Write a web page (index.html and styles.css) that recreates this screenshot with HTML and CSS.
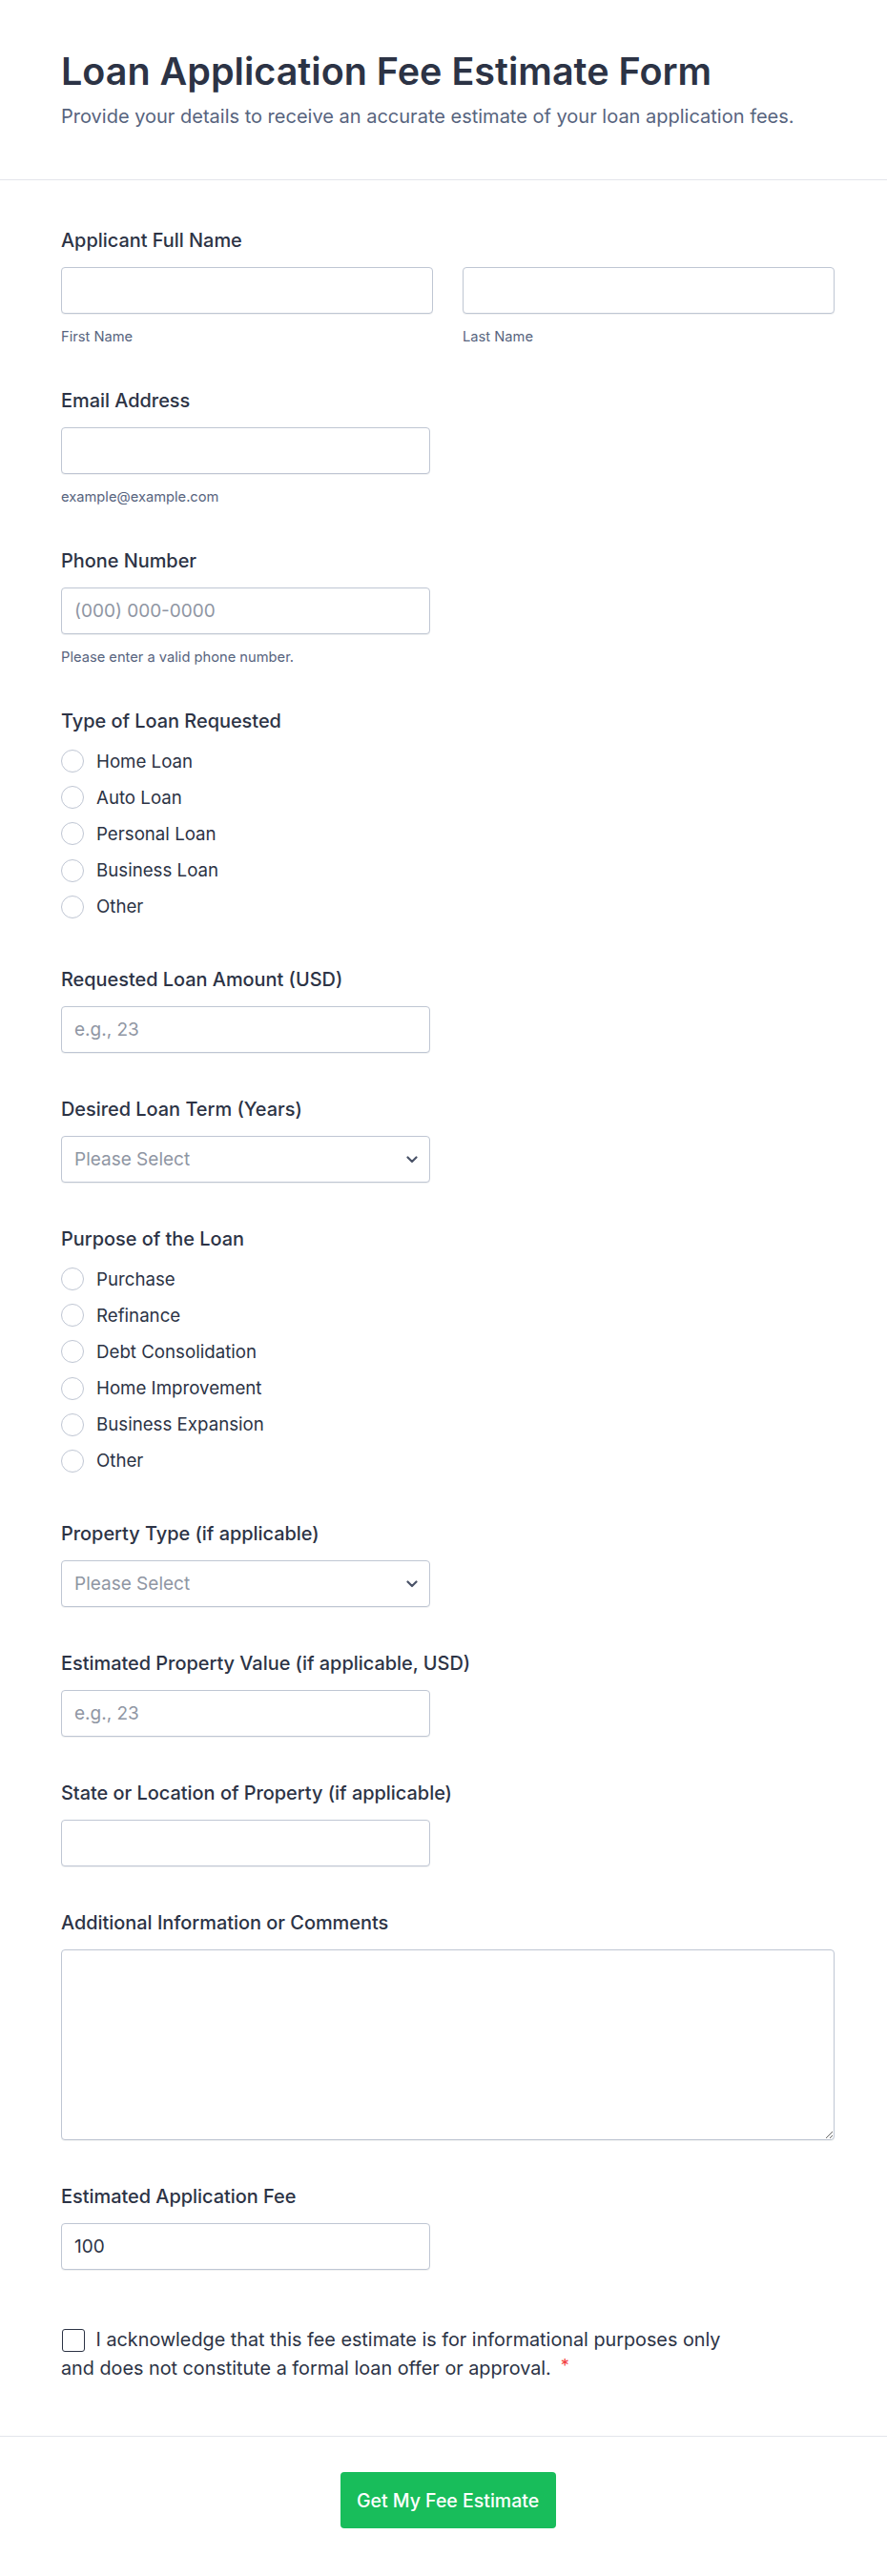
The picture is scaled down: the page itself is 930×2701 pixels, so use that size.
FILE: index.html
```html
<!DOCTYPE html>
<html lang="en">
<head>
<meta charset="utf-8">
<title>Loan Application Fee Estimate Form</title>
<link rel="stylesheet" href="styles.css">
</head>
<body>
<div class="page">
  <header class="form-header">
    <h1 class="form-title">Loan Application Fee Estimate Form</h1>
    <p class="form-subtitle">Provide your details to receive an accurate estimate of your loan application fees.</p>
  </header>

  <main class="form-body">
    <div class="field">
      <label class="field-label">Applicant Full Name</label>
      <div class="name-grid">
        <div class="sub-field">
          <input class="text-input full" type="text">
          <span class="sublabel">First Name</span>
        </div>
        <div class="sub-field">
          <input class="text-input full" type="text">
          <span class="sublabel">Last Name</span>
        </div>
      </div>
    </div>

    <div class="field">
      <label class="field-label">Email Address</label>
      <input class="text-input" type="email">
      <span class="sublabel">example@example.com</span>
    </div>

    <div class="field">
      <label class="field-label">Phone Number</label>
      <input class="text-input" type="tel" placeholder="(000) 000-0000">
      <span class="sublabel">Please enter a valid phone number.</span>
    </div>

    <div class="field field-options">
      <label class="field-label">Type of Loan Requested</label>
      <div class="options">
        <label class="option"><input class="radio" type="radio" name="loantype"><span>Home Loan</span></label>
        <label class="option"><input class="radio" type="radio" name="loantype"><span>Auto Loan</span></label>
        <label class="option"><input class="radio" type="radio" name="loantype"><span>Personal Loan</span></label>
        <label class="option"><input class="radio" type="radio" name="loantype"><span>Business Loan</span></label>
        <label class="option"><input class="radio" type="radio" name="loantype"><span>Other</span></label>
      </div>
    </div>

    <div class="field">
      <label class="field-label">Requested Loan Amount (USD)</label>
      <input class="text-input" type="text" placeholder="e.g., 23">
    </div>

    <div class="field">
      <label class="field-label">Desired Loan Term (Years)</label>
      <div class="select-wrap">
        <select class="select-input">
          <option>Please Select</option>
        </select>
        <svg class="chevron" width="12" height="8" viewBox="0 0 12 8"><path d="M1.5 1.5 L6 6 L10.5 1.5" fill="none" stroke="#4a5368" stroke-width="2.2" stroke-linecap="round" stroke-linejoin="round"/></svg>
      </div>
    </div>

    <div class="field field-options">
      <label class="field-label">Purpose of the Loan</label>
      <div class="options">
        <label class="option"><input class="radio" type="radio" name="purpose"><span>Purchase</span></label>
        <label class="option"><input class="radio" type="radio" name="purpose"><span>Refinance</span></label>
        <label class="option"><input class="radio" type="radio" name="purpose"><span>Debt Consolidation</span></label>
        <label class="option"><input class="radio" type="radio" name="purpose"><span>Home Improvement</span></label>
        <label class="option"><input class="radio" type="radio" name="purpose"><span>Business Expansion</span></label>
        <label class="option"><input class="radio" type="radio" name="purpose"><span>Other</span></label>
      </div>
    </div>

    <div class="field">
      <label class="field-label">Property Type (if applicable)</label>
      <div class="select-wrap">
        <select class="select-input">
          <option>Please Select</option>
        </select>
        <svg class="chevron" width="12" height="8" viewBox="0 0 12 8"><path d="M1.5 1.5 L6 6 L10.5 1.5" fill="none" stroke="#4a5368" stroke-width="2.2" stroke-linecap="round" stroke-linejoin="round"/></svg>
      </div>
    </div>

    <div class="field">
      <label class="field-label">Estimated Property Value (if applicable, USD)</label>
      <input class="text-input" type="text" placeholder="e.g., 23">
    </div>

    <div class="field">
      <label class="field-label">State or Location of Property (if applicable)</label>
      <input class="text-input" type="text">
    </div>

    <div class="field">
      <label class="field-label">Additional Information or Comments</label>
      <textarea class="textarea-input"></textarea>
    </div>

    <div class="field">
      <label class="field-label">Estimated Application Fee</label>
      <input class="text-input" type="text" value="100">
    </div>

    <div class="field field-check">
      <label class="check-label"><input class="checkbox" type="checkbox"> I acknowledge that this fee estimate is for informational purposes only<br>and does not constitute a formal loan offer or approval.<span class="required">*</span></label>
    </div>
  </main>

  <footer class="form-footer">
    <button class="submit-btn" type="button">Get My Fee Estimate</button>
  </footer>
</div>
</body>
</html>
```

FILE: styles.css
```css
* { box-sizing: border-box; }

html, body {
  margin: 0;
  padding: 0;
  background: #ffffff;
}

body {
  font-family: Inter, "Noto Sans", "Liberation Sans", sans-serif;
  color: #2c3345;
}

.page {
  width: 930px;
}

.form-header {
  padding: 52px 55px 52px 64px;
  border-bottom: 1px solid #e3e5eb;
}

.form-title {
  margin: 0;
  font-size: 39.5px;
  line-height: 47px;
  font-weight: 600;
  color: #2c3345;
}

.form-subtitle {
  margin: 10px 0 0;
  font-size: 20px;
  line-height: 27px;
  font-weight: 400;
  color: #57647e;
}

.form-body {
  display: flex;
  flex-direction: column;
  gap: 47px;
  padding: 51px 55px 57px 64px;
}

.field {
  display: flex;
  flex-direction: column;
  align-items: flex-start;
}

.field-label {
  display: block;
  font-size: 19.9px;
  line-height: 24px;
  font-weight: 500;
  color: #2c3345;
  margin-bottom: 16px;
}

.name-grid {
  display: grid;
  grid-template-columns: 1fr 1fr;
  column-gap: 31px;
  width: 100%;
}

.sub-field {
  display: flex;
  flex-direction: column;
}

.text-input,
.select-input,
.textarea-input {
  font-family: inherit;
  font-size: 19px;
  color: #2c3345;
  background: #ffffff;
  border: 1px solid #bfc6d3;
  border-radius: 4px;
  outline: none;
  box-shadow: 0 1px 0 rgba(43, 52, 69, 0.07);
}

.text-input {
  width: 387px;
  height: 49px;
  padding: 0 13px;
}

.text-input.full {
  width: 100%;
}

.text-input::placeholder {
  color: #8f96a3;
}

.sublabel {
  display: block;
  margin-top: 16px;
  font-size: 14.7px;
  line-height: 16px;
  color: #57647e;
}

.select-wrap {
  position: relative;
  width: 387px;
}

.select-input {
  display: block;
  width: 100%;
  height: 49px;
  padding: 0 36px 0 13px;
  -webkit-appearance: none;
  appearance: none;
  color: #8f96a3;
}

.chevron {
  position: absolute;
  right: 13px;
  top: 21px;
  pointer-events: none;
}

.textarea-input {
  display: block;
  width: 100%;
  height: 200px;
  padding: 12px 14px;
  resize: vertical;
}

.field-options {
  margin-bottom: -2px;
}

.options {
  display: flex;
  flex-direction: column;
  margin-top: -5px;
}

.option {
  display: flex;
  align-items: center;
  height: 38.2px;
  font-size: 18.7px;
  color: #2c3345;
  cursor: pointer;
}

.radio {
  -webkit-appearance: none;
  appearance: none;
  width: 24px;
  height: 24px;
  margin: 0 13px 0 0;
  border: 1.5px solid #bfc6d3;
  border-radius: 50%;
  background: #ffffff;
  flex: none;
}

.field-check {
  padding-top: 13px;
}

.check-label {
  display: block;
  font-size: 19.8px;
  line-height: 27px;
  color: #2c3345;
}

.checkbox {
  -webkit-appearance: none;
  appearance: none;
  width: 24px;
  height: 24px;
  margin: 0 6px 0 1px;
  border: 1.5px solid #2c3345;
  border-radius: 3px;
  background: #ffffff;
  vertical-align: -6px;
}

.required {
  color: #f23a3c;
  margin-left: 10px;
  font-size: 18px;
  vertical-align: 3px;
}

.form-footer {
  border-top: 1px solid #e3e5eb;
  padding: 37px 55px 50px 64px;
  display: flex;
  justify-content: center;
}

.submit-btn {
  width: 226px;
  height: 59px;
  border: none;
  border-radius: 4px;
  background: #18bd5b;
  color: #ffffff;
  font-family: inherit;
  font-size: 19.5px;
  font-weight: 500;
  cursor: pointer;
}
```
